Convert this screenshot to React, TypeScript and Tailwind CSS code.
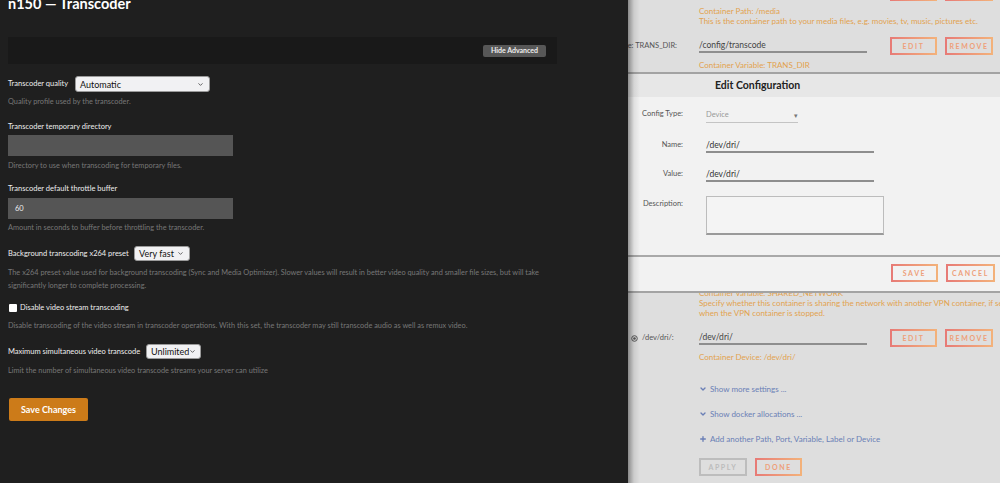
import React from 'react'
import { ChevronDown, Plus } from 'lucide-react'

const lato = { fontFamily: 'Lato, "Open Sans", sans-serif' }

// orange gradient-bordered button used on the docker page
const GradBtn = ({ label, w, inner = 'bg-[#dedede]', dim }: { label: string; w: string; inner?: string; dim?: boolean }) => (
  <div
    className={`${w} h-[18px] p-[2px] shrink-0 ${dim ? 'bg-[#bdbdbd]' : 'bg-gradient-to-r from-[#e77a76] to-[#f3b27a]'}`}
  >
    <div className={`h-full w-full flex items-center justify-center ${inner}`}>
      <span className={`text-[7px] font-bold tracking-[1.6px] ${dim ? 'text-[#bcbcbc]' : 'text-[#eea07a]'}`}>
        {label}
      </span>
    </div>
  </div>
)

const SmallSelect = ({ value, w }: { value: string; w: string }) => (
  <div className={`${w} h-full rounded-[3px] bg-[#f1f1f3] border border-[#9a9a9a] flex items-center justify-between pl-[4px] pr-[5px] shrink-0`}>
    <span className="text-[9px] text-[#111] leading-none whitespace-nowrap">{value}</span>
    <ChevronDown size={7} strokeWidth={2.5} className="text-[#333] shrink-0" />
  </div>
)

const FieldRow = ({ label, value }: { label: string; value: string }) => (
  <div className="h-[16px] flex items-center">
    <div className="w-[49px] shrink-0 flex justify-end whitespace-nowrap text-[7.5px] text-[#555]">{label}</div>
    <div className="w-[22px] shrink-0" />
    <div className="w-[168px] shrink-0 h-[14px] border-b-2 border-[#8e8e8e] text-[8.5px] text-[#444] leading-[12px]">
      {value}
    </div>
    <div className="w-[23px] shrink-0" />
    <div className="flex gap-[8px]">
      <GradBtn label="EDIT" w="w-[47px]" />
      <GradBtn label="REMOVE" w="w-[48px]" />
    </div>
  </div>
)

const ModalField = ({ label, children }: { label: string; children: React.ReactNode }) => (
  <div className="flex items-start">
    <div className="w-[55px] shrink-0 text-right text-[7.5px] text-[#555] leading-[12px]">{label}</div>
    <div className="w-[23px] shrink-0" />
    {children}
  </div>
)

export default function App() {
  return (
    <div className="w-[1000px] h-[483px] flex overflow-hidden" style={lato}>
      {/* Plex settings pane */}
      <div className="w-[628px] shrink-0 h-full bg-[#1f1f1f] px-[8px]">
        <div className="-mt-[6px] h-[20px] text-[14.5px] leading-[20px] font-bold text-white">n150 — Transcoder</div>

        <div className="mt-[23px] h-[27px] w-[549px] bg-[#191919] flex items-center justify-end pr-[11px]">
          <div className="h-[12px] w-[63px] bg-[#575757] rounded-[2px] flex items-center justify-center text-[7px] font-bold text-[#eee] whitespace-nowrap">
            Hide Advanced
          </div>
        </div>

        <div className="mt-[12px] h-[16px] flex items-center">
          <span className="text-[7.5px] text-[#eee] w-[67px] whitespace-nowrap">Transcoder quality</span>
          <SmallSelect value="Automatic" w="w-[135px]" />
        </div>
        <p className="mt-[4px] text-[7.35px] leading-[12px] text-[#777]">Quality profile used by the transcoder.</p>

        <p className="mt-[13px] text-[7.5px] leading-[12px] text-[#eee]">Transcoder temporary directory</p>
        <div className="mt-[2px] h-[21px] w-[225px] bg-[#555]" />
        <p className="mt-[4px] text-[7.35px] leading-[12px] text-[#777]">Directory to use when transcoding for temporary files.</p>

        <p className="mt-[11px] text-[7.5px] leading-[12px] text-[#eee]">Transcoder default throttle buffer</p>
        <div className="mt-[3px] h-[21px] w-[225px] bg-[#555] flex items-center pl-[7px] text-[7.5px] text-[#eee]">60</div>
        <p className="mt-[3px] text-[7.35px] leading-[12px] text-[#777]">Amount in seconds to buffer before throttling the transcoder.</p>

        <div className="mt-[12px] h-[15px] flex items-center">
          <span className="text-[7.5px] text-[#eee] w-[126px] whitespace-nowrap">Background transcoding x264 preset</span>
          <SmallSelect value="Very fast" w="w-[56px]" />
        </div>
        <p className="mt-[5px] text-[7.35px] leading-[13px] text-[#777] w-[545px]">
          The x264 preset value used for background transcoding (Sync and Media Optimizer). Slower values will result in better video quality and smaller file sizes, but will take significantly longer to complete processing.
        </p>

        <div className="mt-[10px] h-[12px] flex items-center gap-[3px]">
          <div className="w-[8px] h-[8px] ml-[1px] bg-white rounded-[1px]" />
          <span className="text-[7.5px] text-[#eee]">Disable video stream transcoding</span>
        </div>
        <p className="mt-[6px] text-[7.35px] leading-[12px] text-[#777]">
          Disable transcoding of the video stream in transcoder operations. With this set, the transcoder may still transcode audio as well as remux video.
        </p>

        <div className="mt-[12px] h-[15px] flex items-center">
          <span className="text-[7.5px] text-[#eee] w-[138px] whitespace-nowrap">Maximum simultaneous video transcode</span>
          <SmallSelect value="Unlimited" w="w-[55px]" />
        </div>
        <p className="mt-[6px] text-[7.35px] leading-[12px] text-[#777]">Limit the number of simultaneous video transcode streams your server can utilize</p>

        <div className="mt-[21px] h-[23px] w-[79px] ml-[1px] bg-[#cc7b19] rounded-[2px] flex items-center justify-center text-[9px] font-bold text-white">
          Save Changes
        </div>
      </div>

      {/* Unraid docker edit pane */}
      <div className="relative w-[372px] shrink-0 h-full bg-[#dedede] flex flex-col">
        <div className="h-[72px] overflow-hidden shrink-0">
          <div className="-mt-[17px] h-[18px] flex pl-[262px] gap-[8px]">
            <GradBtn label="EDIT" w="w-[47px]" />
            <GradBtn label="REMOVE" w="w-[48px]" />
          </div>
          <div className="mt-[5px] pl-[71px] text-[8px] leading-[10px] text-[#e2a24e]">
            <p>Container Path: /media</p>
            <p>This is the container path to your media files, e.g. movies, tv, music, pictures etc.</p>
          </div>
          <div className="mt-[12px]">
            <FieldRow label="Container Variable: TRANS_DIR:" value="/config/transcode" />
          </div>
          <p className="mt-[6px] pl-[71px] text-[8px] leading-[10px] text-[#e2a24e]">Container Variable: TRANS_DIR</p>
        </div>

        {/* modal */}
        <div className="relative z-10 shrink-0 border-t-2 border-b-2 border-[#a3a3a3] bg-[#f2f2f2]">
          <div className="h-[23px] bg-[#e7e7e7] flex items-center pl-[87px] text-[10.5px] font-bold text-[#222]">
            Edit Configuration
          </div>
          <div className="h-[158px] pt-[11px]">
            <ModalField label="Config Type:">
              <div className="w-[92px] h-[15px] border-b border-[#c4c4c4] flex items-start justify-between text-[7.5px] leading-[14px] text-[#999]">
                <span>Device</span>
                <span className="text-[7px] text-[#777]">▾</span>
              </div>
            </ModalField>
            <div className="mt-[16px]">
              <ModalField label="Name:">
                <div className="w-[168px] h-[14px] border-b-2 border-[#8e8e8e] text-[8.5px] leading-[12px] text-[#333]">/dev/dri/</div>
              </ModalField>
            </div>
            <div className="mt-[15px]">
              <ModalField label="Value:">
                <div className="w-[168px] h-[14px] border-b-2 border-[#8e8e8e] text-[8.5px] leading-[12px] text-[#333]">/dev/dri/</div>
              </ModalField>
            </div>
            <div className="mt-[16px]">
              <ModalField label="Description:">
                <div className="mt-[-2px] w-[178px] h-[39px] border border-[#bcbcbc] border-b-2 border-b-[#9a9a9a] bg-[#f4f4f4]" />
              </ModalField>
            </div>
          </div>
          <div className="h-[36px] border-t-2 border-[#a9a9a9] pt-[7px] flex justify-end gap-[8px] pr-[5px]">
            <GradBtn label="SAVE" w="w-[47px]" inner="bg-[#f2f2f2]" />
            <GradBtn label="CANCEL" w="w-[49px]" inner="bg-[#f2f2f2]" />
          </div>
        </div>

        <div className="flex-1 overflow-hidden">
          <div className="-mt-[5px] pl-[71px] text-[8px] leading-[10px] text-[#e2a24e] whitespace-nowrap">
            <p>Container Variable: SHARED_NETWORK</p>
            <p>Specify whether this container is sharing the network with another VPN container, if set to 'yes' the container will be restarted</p>
            <p>when the VPN container is stopped.</p>
          </div>
          <div className="mt-[12px] h-[16px] flex items-center">
            <div className="w-[49px] shrink-0 flex items-center gap-[4px] pl-[3px] whitespace-nowrap text-[7.5px] text-[#555]">
              <svg width="7" height="7" viewBox="0 0 10 10" className="shrink-0">
                <circle cx="5" cy="5" r="4" fill="none" stroke="#555" strokeWidth="1.4" />
                <circle cx="5" cy="5" r="1.8" fill="#555" />
              </svg>
              <span>/dev/dri/:</span>
            </div>
            <div className="w-[22px] shrink-0" />
            <div className="w-[168px] shrink-0 h-[14px] border-b-2 border-[#8e8e8e] text-[8.5px] text-[#444] leading-[12px]">/dev/dri/</div>
            <div className="w-[23px] shrink-0" />
            <div className="flex gap-[8px]">
              <GradBtn label="EDIT" w="w-[47px]" />
              <GradBtn label="REMOVE" w="w-[48px]" />
            </div>
          </div>
          <p className="mt-[6px] pl-[71px] text-[8px] leading-[10px] text-[#e2a24e]">Container Device: /dev/dri/</p>

          <div className="pl-[71px] text-[8px] leading-[10px] text-[#6a7fb6]">
            <div className="mt-[22px] flex items-center gap-[3px]">
              <ChevronDown size={8} strokeWidth={4} />
              <span>Show more settings ...</span>
            </div>
            <div className="mt-[15px] flex items-center gap-[3px]">
              <ChevronDown size={8} strokeWidth={4} />
              <span>Show docker allocations ...</span>
            </div>
            <div className="mt-[15px] flex items-center gap-[3px]">
              <Plus size={8} strokeWidth={4} />
              <span>Add another Path, Port, Variable, Label or Device</span>
            </div>
          </div>

          <div className="mt-[14px] pl-[71px] flex gap-[8px]">
            <GradBtn label="APPLY" w="w-[48px]" dim />
            <GradBtn label="DONE" w="w-[47px]" />
          </div>
        </div>

        {/* shadow cast by the sliding panel edge */}
        <div className="pointer-events-none absolute z-20 left-0 top-0 bottom-0 w-[12px] bg-gradient-to-r from-[rgba(0,0,0,0.38)] via-[rgba(0,0,0,0.08)] to-transparent" />
      </div>
    </div>
  )
}
